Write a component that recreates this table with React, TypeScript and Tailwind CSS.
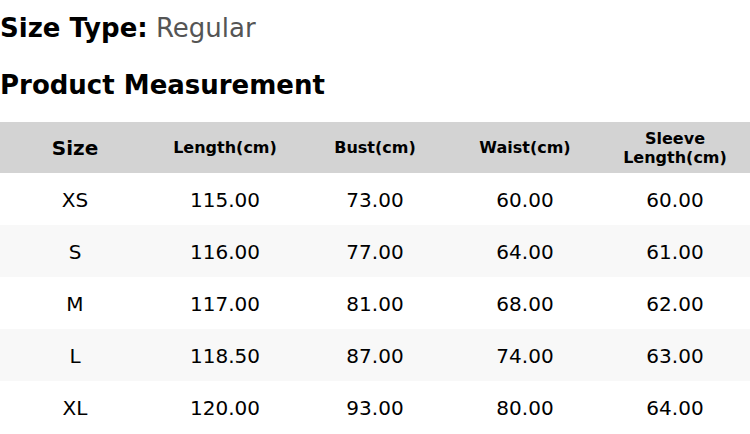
const COLUMNS = ['Length(cm)', 'Bust(cm)', 'Waist(cm)', 'Sleeve Length(cm)']

const ROWS: [string, string, string, string, string][] = [
  ['XS', '115.00', '73.00', '60.00', '60.00'],
  ['S', '116.00', '77.00', '64.00', '61.00'],
  ['M', '117.00', '81.00', '68.00', '62.00'],
  ['L', '118.50', '87.00', '74.00', '63.00'],
  ['XL', '120.00', '93.00', '80.00', '64.00'],
]

export default function App() {
  return (
    <div className="w-[750px] h-[434px] overflow-hidden bg-white text-black font-['DejaVu_Sans',sans-serif]">
      <p className="mt-[13px] text-[26px] leading-[30px] whitespace-nowrap">
        <span className="font-bold">Size Type:</span>{' '}
        <span className="text-[#555555]">Regular</span>
      </p>
      <h2 className="mt-[27px] text-[26px] leading-[30px] font-bold">Product Measurement</h2>

      <div className="mt-[22px] grid grid-cols-5">
        <div className="h-[51px] bg-[#d3d3d3] flex items-center justify-center text-[20px] font-bold">
          Size
        </div>
        {COLUMNS.map((col) => (
          <div
            key={col}
            className="h-[51px] bg-[#d3d3d3] flex items-center justify-center px-2 text-center text-[16px] leading-[19px] font-bold"
          >
            {col}
          </div>
        ))}

        {ROWS.map((row, i) =>
          row.map((cell, j) => (
            <div
              key={`${i}-${j}`}
              className={`h-[52px] pt-[2px] flex items-center justify-center text-[20px] ${
                i % 2 === 1 ? 'bg-[#f8f8f8]' : 'bg-white'
              }`}
            >
              {cell}
            </div>
          ))
        )}
      </div>
    </div>
  )
}
